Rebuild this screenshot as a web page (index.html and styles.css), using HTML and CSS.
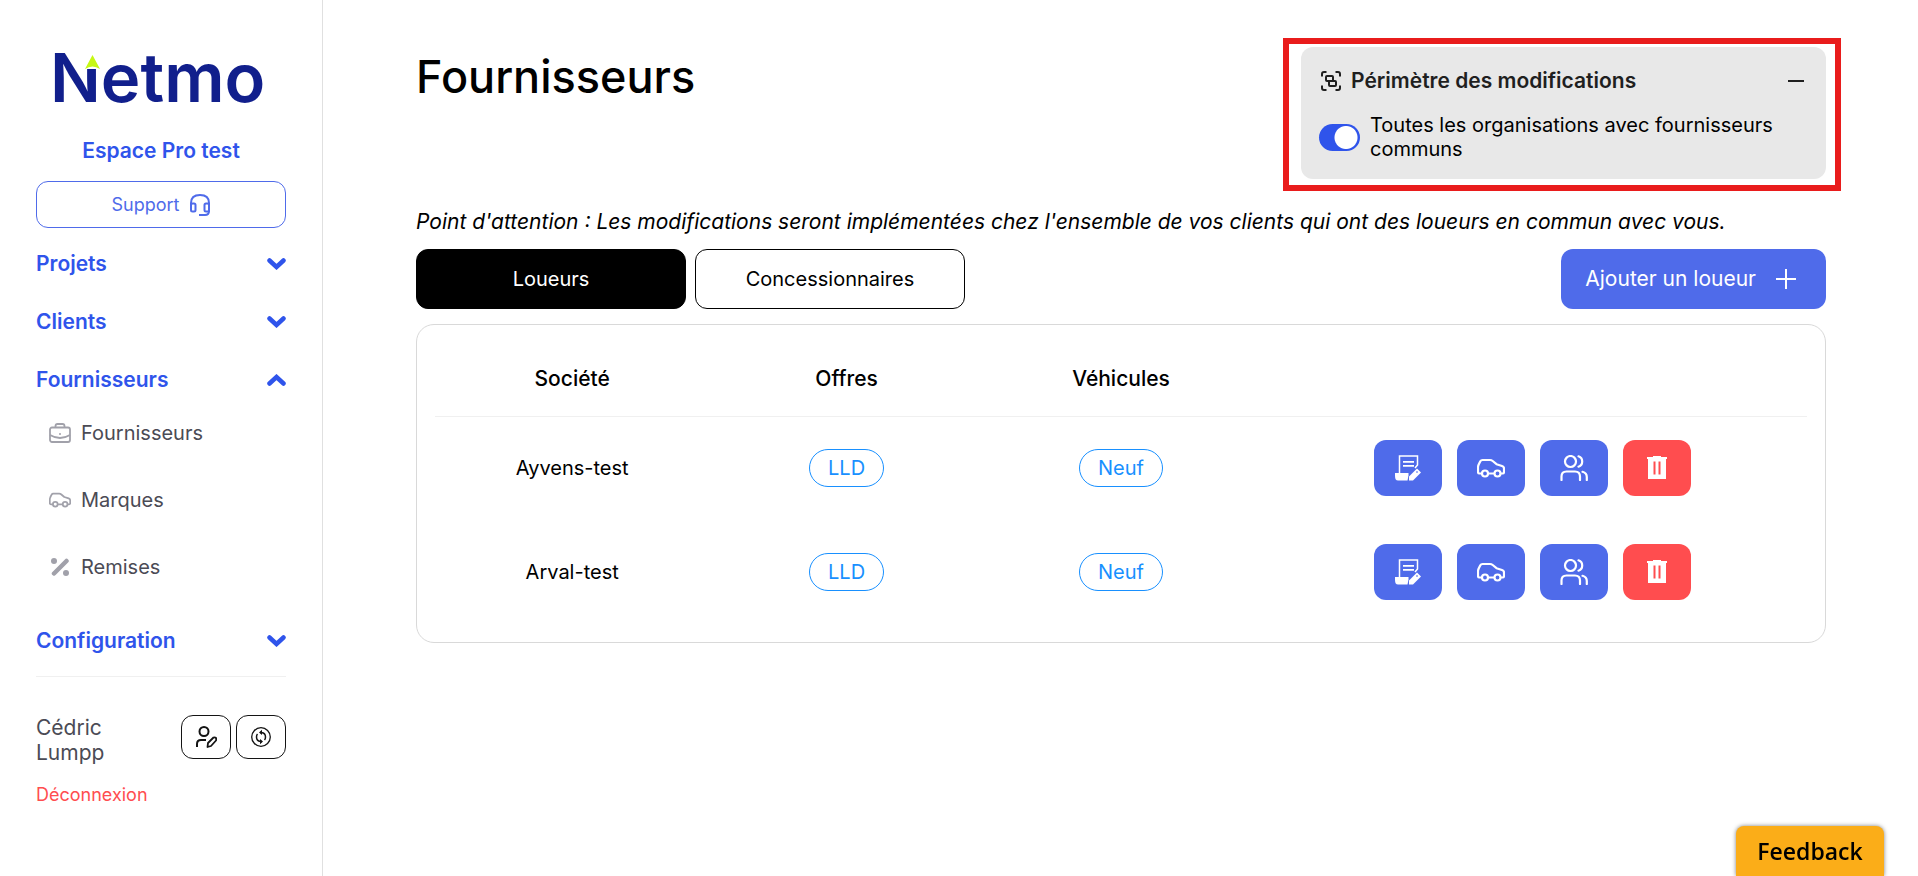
FILE: index.html
```html
<!DOCTYPE html>
<html lang="fr">
<head>
<meta charset="utf-8">
<title>Netmo - Fournisseurs</title>
<link rel="stylesheet" href="styles.css">
</head>
<body>
<svg class="sprite" aria-hidden="true">
	<symbol id="chevron" viewBox="0 0 19 12">
		<path d="M2.500 2.500 L9.500 9 L16.500 2.500" fill="none" stroke="currentColor" stroke-width="4.500" stroke-linecap="round" stroke-linejoin="miter"/>
	</symbol>
	<symbol id="car" viewBox="0 0 28 20">
		<g fill="none" stroke="currentColor" stroke-width="2.200" stroke-linejoin="round">
			<path d="M5 15.500 H2.500 Q1 15.500 1 14 V9.500 Q1 8 1.700 6.500 L3.300 3.300 Q4 2 5.500 2 H13 Q14.500 2 15.700 3 L19.500 6.200 L25 8 Q27 8.700 27 10.500 V14 Q27 15.500 25.500 15.500 H24 M11.500 15.500 H18"/>
			<circle cx="8" cy="15.500" r="3"/>
			<circle cx="20.500" cy="15.500" r="3"/>
		</g>
	</symbol>
	<symbol id="offer" viewBox="0 0 26 26">
		<path d="M4.500 18 V1 H22.500 V10 L20 13" fill="none" stroke="currentColor" stroke-width="1.500"/>
		<path d="M8 6.800 H19 M8 10.800 H19" fill="none" stroke="currentColor" stroke-width="1.800"/>
		<path d="M0 18 H13.500 V20.500 L12.500 25.500 H3 Q0 25.500 0 21 Z" fill="currentColor"/>
		<path fill-rule="evenodd" fill="currentColor" d="M14 25.500 V21.500 L22 13.500 L26 17.500 L18 25.500 Z M22 16 L21 17 L22 18 L23 17 Z"/>
	</symbol>
	<symbol id="users" viewBox="0 0 28 26">
		<g fill="none" stroke="currentColor" stroke-width="2.200" stroke-linecap="round" stroke-linejoin="round">
			<circle cx="10.500" cy="6.500" r="5.500"/>
			<path d="M1.500 25 V21.500 Q1.500 16.500 6.500 16.500 H15 Q20 16.500 20 21.500 V25 M18.500 1.300 A5.500 5.500 0 0 1 18.500 11.700 M22.500 16.800 Q26.800 18 26.800 22 V25"/>
		</g>
	</symbol>
	<symbol id="trash" viewBox="0 0 20 24">
		<path fill="currentColor" fill-rule="evenodd" d="M0 1 H6 V0 H14 V1 H20 V3 H19 V23 H1 V3 H0 Z M6.500 5.500 V18.500 H8.500 V5.500 Z M11.500 5.500 V18.500 H13.500 V5.500 Z"/>
	</symbol>
</svg>

<div class="app">
	<aside class="sidebar">
		<svg class="logo" viewBox="0 0 214 50" role="img" aria-label="Netmo">
			<text x="-4" y="48">Netmo</text>
			<path d="M30 -2 H47 V15 H30 Z" fill="#fff"/>
			<path d="M38.500 1 L46 15 Q38.500 10 31 15 Z" fill="#c6f815"/>
		</svg>
		<p class="space">Espace Pro test</p>
		<button class="support">Support
			<svg width="20" height="22" viewBox="0 0 20 22" fill="none" stroke="currentColor" stroke-width="2">
				<path d="M1 11 V9 Q1 1 10 1 Q19 1 19 9 V17 Q19 21 15 21 H9"/>
				<rect x="1" y="9.500" width="4.500" height="8" rx="1.500"/>
				<rect x="14.500" y="9.500" width="4.500" height="8" rx="1.500"/>
			</svg>
		</button>

		<nav>
			<button class="group">Projets <svg class="chevron"><use href="#chevron"/></svg></button>
			<button class="group">Clients <svg class="chevron"><use href="#chevron"/></svg></button>
			<button class="group">Fournisseurs <svg class="chevron up"><use href="#chevron"/></svg></button>
			<ul class="submenu">
				<li><a href="#">
					<svg width="22" height="20" viewBox="0 0 22 20" fill="none" stroke="currentColor" stroke-width="1.800">
						<rect x="1" y="4.500" width="20" height="14.500" rx="2"/>
						<path d="M6.500 4.500 V3 Q6.500 1 8.500 1 H13.500 Q15.500 1 15.500 3 V4.500 M1 12 Q11 18 21 12"/>
						<circle cx="11" cy="11" r="1" fill="currentColor" stroke="none"/>
					</svg>
					Fournisseurs</a></li>
				<li><a href="#"><svg width="22" height="16"><use href="#car"/></svg>Marques</a></li>
				<li><a href="#">
					<svg width="22" height="18" viewBox="0 0 22 18" fill="currentColor">
						<circle cx="5" cy="3" r="3"/>
						<circle cx="17" cy="15" r="3"/>
						<path d="M5 15.500 L17.500 3" stroke="currentColor" stroke-width="4.500" stroke-linecap="round"/>
					</svg>
					Remises</a></li>
			</ul>
			<button class="group">Configuration <svg class="chevron"><use href="#chevron"/></svg></button>
		</nav>

		<div class="user">
			<span class="name">Cédric Lumpp</span>
			<button class="square" aria-label="Modifier le profil">
				<svg width="22" height="22" viewBox="0 0 22 22" fill="none" stroke="currentColor" stroke-width="2">
					<circle cx="9" cy="5.500" r="4.500"/>
					<path d="M2 21 V18 Q2 14 6 14 H11"/>
					<path d="M12.500 21 L13 17 L18.500 11.500 Q20 11 21 12 Q21.500 13 21 14.500 L16 20 Z" stroke-width="1.800" stroke-linejoin="round"/>
				</svg>
			</button>
			<button class="square" aria-label="Changer de compte">
				<svg width="20" height="20" viewBox="0 0 20 20" fill="none" stroke="currentColor" stroke-width="1.300">
					<circle cx="10" cy="10" r="9.300"/>
					<path d="M9 5.500 H10.500 Q14.500 6 14.500 10 Q14.500 12 13.500 13 M11 14.500 H9.500 Q5.500 14 5.500 10 Q5.500 8 6.500 7" stroke-width="1.500"/>
					<path d="M11 2.800 L8 5.500 L11 8 Z M9 12 L12 14.500 L9 17.200 Z" fill="currentColor" stroke="none"/>
				</svg>
			</button>
		</div>
		<a href="#" class="logout">Déconnexion</a>
	</aside>

	<main>
		<header>
			<h1>Fournisseurs</h1>
			<section class="scope">
				<div class="scope-title">
					<svg width="20" height="20" viewBox="0 0 20 20" fill="none" stroke="currentColor" stroke-width="2">
						<path d="M1 5.500 V3 Q1 1 3 1 H5.500 M14.500 1 H17 Q19 1 19 3 V5.500 M19 14.500 V17 Q19 19 17 19 H14.500 M5.500 19 H3 Q1 19 1 17 V14.500"/>
						<rect x="5" y="5" width="7" height="5" rx="1"/>
						<rect x="8" y="10" width="7" height="5" rx="1"/>
					</svg>
					<h2>Périmètre des modifications</h2>
					<button class="collapse" aria-label="Réduire"><svg width="16" height="2"><rect width="16" height="2" fill="currentColor"/></svg></button>
				</div>
				<div class="toggle">
					<input type="checkbox" id="all" checked>
					<label for="all">Toutes les organisations avec fournisseurs communs</label>
				</div>
			</section>
		</header>

		<p class="notice">Point d'attention : Les modifications seront implémentées chez l'ensemble de vos clients qui ont des loueurs en commun avec vous.</p>

		<div class="toolbar">
			<button class="tab active">Loueurs</button>
			<button class="tab">Concessionnaires</button>
			<button class="add">Ajouter un loueur
				<svg width="20" height="20" viewBox="0 0 20 20"><path d="M10 0 V20 M0 10 H20" stroke="currentColor" stroke-width="2"/></svg>
			</button>
		</div>

		<div class="card">
			<table>
				<thead>
					<tr><th>Société</th><th>Offres</th><th>Véhicules</th><th class="wide"></th></tr>
				</thead>
				<tbody>
					<tr>
						<td>Ayvens-test</td>
						<td><span class="tag">LLD</span></td>
						<td><span class="tag">Neuf</span></td>
						<td>
							<div class="actions">
								<button aria-label="Offres"><svg width="26" height="26"><use href="#offer"/></svg></button>
								<button aria-label="Véhicules"><svg width="28" height="20"><use href="#car"/></svg></button>
								<button aria-label="Contacts"><svg width="28" height="26"><use href="#users"/></svg></button>
								<button class="delete" aria-label="Supprimer"><svg width="20" height="24"><use href="#trash"/></svg></button>
							</div>
						</td>
					</tr>
					<tr>
						<td>Arval-test</td>
						<td><span class="tag">LLD</span></td>
						<td><span class="tag">Neuf</span></td>
						<td>
							<div class="actions">
								<button aria-label="Offres"><svg width="26" height="26"><use href="#offer"/></svg></button>
								<button aria-label="Véhicules"><svg width="28" height="20"><use href="#car"/></svg></button>
								<button aria-label="Contacts"><svg width="28" height="26"><use href="#users"/></svg></button>
								<button class="delete" aria-label="Supprimer"><svg width="20" height="24"><use href="#trash"/></svg></button>
							</div>
						</td>
					</tr>
				</tbody>
			</table>
		</div>
	</main>
</div>
<button class="feedback">Feedback</button>
</body>
</html>
```
FILE: styles.css
```css
* {
	box-sizing: border-box;
	margin: 0;
	padding: 0;
}
body {
	font-family: Inter, "Liberation Sans", sans-serif;
	font-size: 20px;
	line-height: 24px;
	color: #000;
	background: #fff;
}
button {
	font: inherit;
	color: inherit;
	background: none;
	border: 0;
	cursor: pointer;
}
a {
	color: inherit;
	text-decoration: none;
}
.sprite {
	display: none;
}
.app {
	display: flex;
	min-height: 100vh;
}

/* sidebar */
.sidebar {
	flex: none;
	width: 323px;
	padding: 54px 36px 0;
	border-right: 1px solid #e0e0e0;
	display: flex;
	flex-direction: column;
}
.logo {
	width: 214px;
	height: 50px;
	align-self: center;
	overflow: visible;
}
.logo text {
	font-size: 67px;
	font-weight: 600;
	fill: #111f8c;
}
.space {
	margin: 35px 0 18px;
	text-align: center;
	font-size: 21px;
	font-weight: 600;
	color: #2f54eb;
}
.support {
	height: 47px;
	border: 1px solid #4f6bea;
	border-radius: 12px;
	color: #4f6bea;
	font-size: 18px;
	display: flex;
	align-items: center;
	justify-content: center;
	gap: 11px;
}
nav {
	padding: 7px 0 6px;
	border-bottom: 1px solid #f0f0f0;
}
.group {
	display: flex;
	justify-content: space-between;
	align-items: center;
	width: 100%;
	height: 58px;
	font-size: 21px;
	font-weight: 600;
	color: #2f54eb;
}
.chevron {
	width: 19px;
	height: 12px;
}
.up {
	transform: rotate(180deg);
}
.submenu {
	list-style: none;
	padding: 0 13px 12px;
	margin-top: -10px;
}
.submenu a {
	display: flex;
	align-items: center;
	gap: 10px;
	height: 67px;
	color: #4b4b55;
}
.submenu svg {
	color: #a1a1aa;
}
.user {
	display: flex;
	gap: 5px;
	margin-top: 38px;
	color: #4b4b55;
}
.name {
	flex: 1;
	padding-right: 40px;
	font-size: 21px;
	line-height: 25px;
}
.square {
	width: 50px;
	height: 44px;
	border: 1px solid #141414;
	border-radius: 12px;
	color: #141414;
	display: flex;
	align-items: center;
	justify-content: center;
}
.logout {
	margin-top: 18px;
	font-size: 18px;
	color: #ff4d4f;
}

/* content */
main {
	flex: 1;
	padding: 47px 92px 0 93px;
}
header {
	display: flex;
	justify-content: space-between;
	align-items: flex-start;
}
h1 {
	font-size: 45px;
	line-height: 60px;
	font-weight: 500;
}
.scope {
	position: relative;
	width: 525px;
	padding: 22px 18px 18px;
	border-radius: 12px;
	background: #e8e8e8;
}
.scope::after {
	content: "";
	position: absolute;
	inset: -9px -15px -12px -18px;
	border: 6px solid #e91c1c;
	pointer-events: none;
}
.scope-title {
	display: flex;
	align-items: center;
	gap: 10px;
	padding-left: 2px;
	color: #1f1f1f;
}
.scope h2 {
	flex: 1;
	font-size: 21px;
	font-weight: 600;
}
.collapse {
	display: flex;
	padding: 4px;
}
.toggle {
	display: flex;
	align-items: center;
	gap: 10px;
	margin-top: 20px;
}
.toggle input {
	appearance: none;
	flex: none;
	width: 41px;
	height: 27px;
	border-radius: 14px;
	background: radial-gradient(circle at 27px 50%, #fff 11px, #2f54eb 12px);
}
.notice {
	margin: 31px 0 15px;
	font-size: 21px;
	font-style: italic;
}
.toolbar {
	display: flex;
	gap: 9px;
}
.tab {
	width: 270px;
	height: 60px;
	border: 1px solid #000;
	border-radius: 12px;
}
.active {
	background: #000;
	color: #fff;
}
.add {
	display: flex;
	align-items: center;
	gap: 20px;
	height: 60px;
	margin-left: auto;
	padding: 0 30px 0 24px;
	border-radius: 12px;
	background: #4f6bea;
	color: #fff;
	font-size: 21px;
}
.card {
	margin-top: 15px;
	padding: 18px;
	border: 1px solid #d9d9d9;
	border-radius: 18px;
}
table {
	width: 100%;
	table-layout: fixed;
	border-collapse: collapse;
	text-align: center;
}
th {
	width: 20%;
	height: 73px;
	font-size: 21px;
	font-weight: 500;
	border-bottom: 1px solid #f0f0f0;
}
.wide {
	width: 40%;
}
td {
	height: 104px;
}
.tag {
	display: inline-block;
	padding: 6px 18px;
	border: 1px solid #1890ff;
	border-radius: 19px;
	color: #1890ff;
}
.actions {
	display: flex;
	justify-content: center;
	gap: 15px;
}
.actions button {
	width: 68px;
	height: 56px;
	border-radius: 12px;
	background: #4f6bea;
	color: #fff;
	display: flex;
	align-items: center;
	justify-content: center;
}
.actions .delete {
	background: #ff4d4f;
}
.feedback {
	position: fixed;
	right: 34px;
	bottom: 0;
	width: 148px;
	height: 50px;
	border-radius: 8px 8px 0 0;
	background: #fbad18;
	box-shadow: 0 0 4px rgba(0, 0, 0, .5);
	font: 600 23px "Open Sans", "Noto Sans", sans-serif;
	color: #000;
}
```
